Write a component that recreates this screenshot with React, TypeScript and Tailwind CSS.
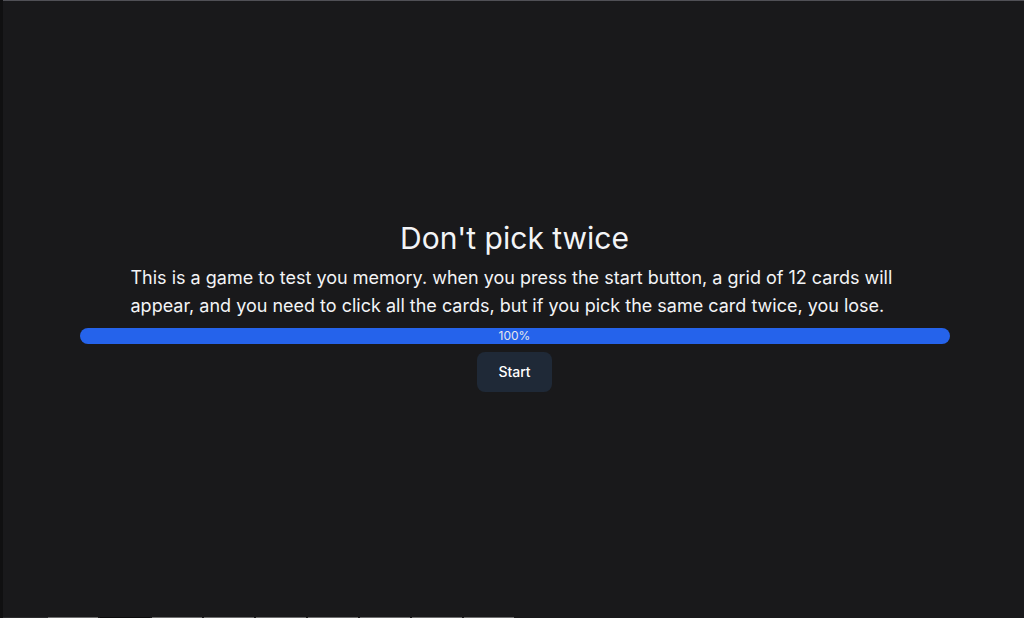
export default function App() {
    const cards = ['#707070', '#0c0c0d', '#707070', '#707070', '#707070', '#707070', '#707070', '#707070', '#707070']

    return (
        <div className="min-h-screen bg-[#101011] pl-[3px] font-['Inter','Noto_Sans',sans-serif] text-[#f3f4f6]">
            <div className="bg-[#19191b]">
                {/* Intro screen */}
                <section className="h-[617px] border-t border-[#505056] pl-[2px] pb-[6px] flex flex-col items-center justify-center gap-2">
                    <h1 className="text-3xl font-normal">Don&apos;t pick twice</h1>
                    <p className="max-w-3xl text-lg leading-7">
                        This is a game to test you memory. when you press the start button, a grid of 12 cards will appear, and you need to click all the cards, but if you pick the same card twice, you lose.
                    </p>
                    <div className="w-[870px] h-4 rounded-full bg-[#2563eb] flex items-center justify-center text-xs leading-4 text-[#e5e7eb]">
                        100%
                    </div>
                    <button className="h-10 px-[21px] rounded-lg bg-[#1f2937] text-sm font-medium text-white">
                        Start
                    </button>
                </section>

                {/* Card row just below the fold */}
                <div className="flex h-[60px]">
                    <div className="w-[45px] bg-[#2c2c2e]" />
                    <div className="flex gap-[2px]">
                        {cards.map((c, i) => (
                            <div key={i} className="w-[50px] h-[60px]" style={{ backgroundColor: c }} />
                        ))}
                    </div>
                </div>
            </div>
        </div>
    )
}
